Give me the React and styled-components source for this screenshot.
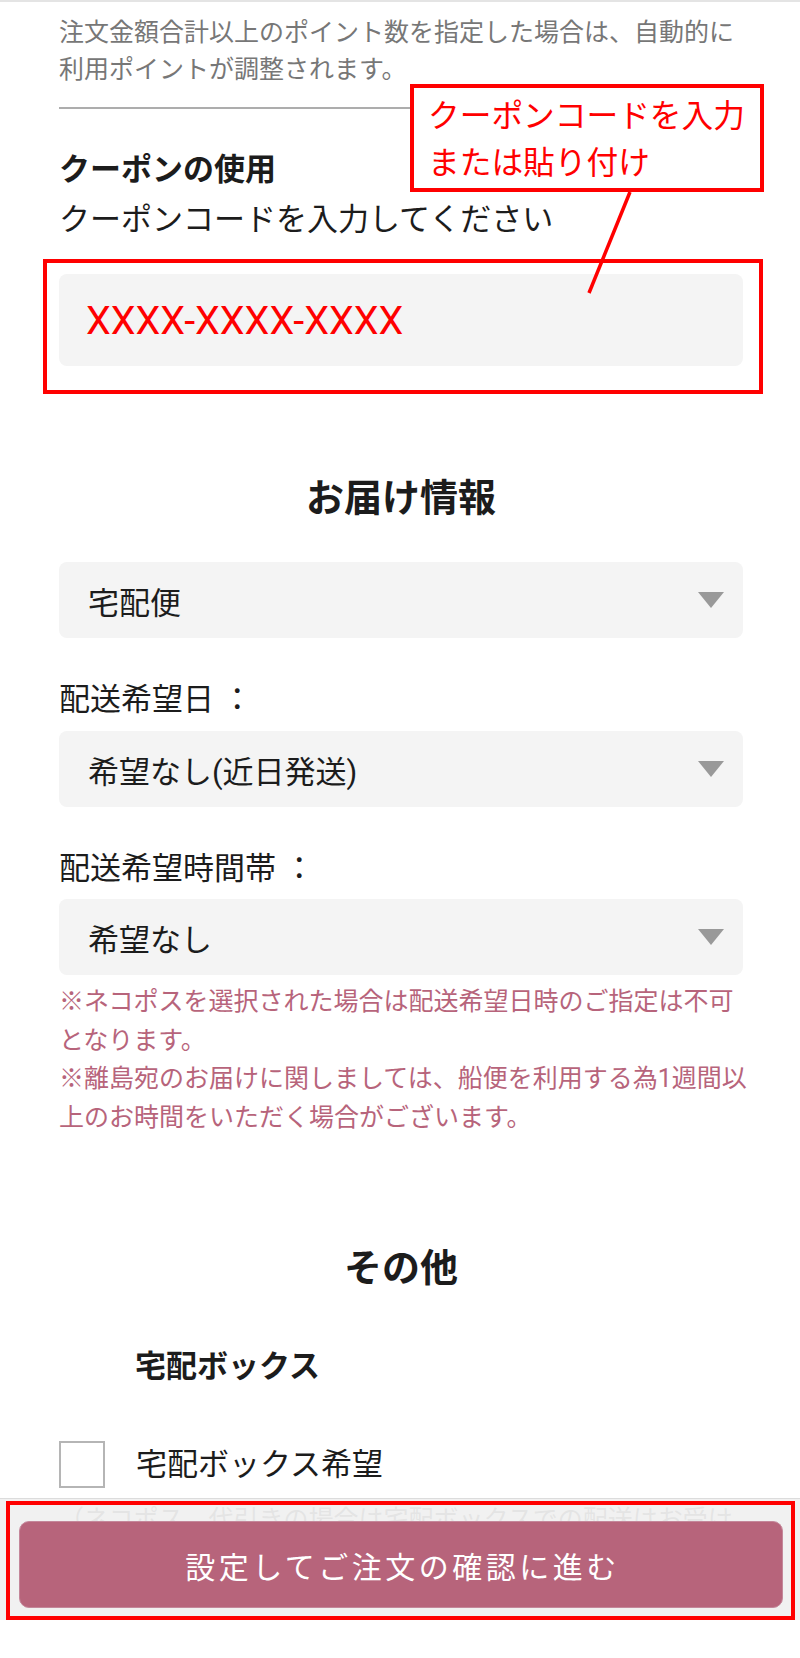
import React from "react";
import styled, { createGlobalStyle } from "styled-components";

const ink = "#1c1c1c";
const grey = "#777777";
const rose = "#b7647b";
const field = "#f4f4f4";
const mark = "#ff0000";

const GlobalStyle = createGlobalStyle`
  html, body {
    margin: 0;
    padding: 0;
    background: #fff;
  }
  body {
    font-family: Roboto, "Noto Sans CJK JP", sans-serif;
    color: ${ink};
  }
  * {
    box-sizing: border-box;
  }
`;

const Page = styled.div`
  position: relative;
  border-top: 2px solid #e4e4e4;
  padding: 0 57px 0 59px;
  height: 1656px;
  overflow: hidden;
`;

const Note = styled.p`
  margin: ${(p) => p.$mt || 0}px 0 0;
  font-size: 25px;
  line-height: ${(p) => p.$lh || 37}px;
  color: ${(p) => p.$color || grey};
  white-space: nowrap;
`;

const Rule = styled.div`
  margin-top: 19px;
  height: 2px;
  background: #adadad;
`;

const FieldTitle = styled.h3`
  margin: ${(p) => p.$mt}px 0 0;
  padding-left: ${(p) => p.$indent || 0}px;
  font-size: 31px;
  line-height: 50px;
  font-weight: 700;
`;

const FieldLabel = styled.div`
  margin-top: ${(p) => p.$mt || 0}px;
  font-size: 31px;
  line-height: 50px;
`;

const CouponInput = styled.input`
  display: block;
  width: 100%;
  height: 92px;
  margin-top: 29px;
  padding: 0 27px;
  border: none;
  border-radius: 8px;
  background: ${field};
  font-family: Roboto, sans-serif;
  font-size: 39.5px;
  color: ${mark};
  outline: none;
`;

const SectionTitle = styled.h2`
  margin: ${(p) => p.$mt}px 0 0;
  text-align: center;
  font-size: 38px;
  line-height: 50px;
  font-weight: 700;
`;

const Select = styled.div`
  display: flex;
  align-items: center;
  justify-content: space-between;
  height: 76px;
  margin-top: ${(p) => p.$mt}px;
  padding: 0 19px 0 29px;
  border-radius: 8px;
  background: ${field};
  font-size: 31px;
`;

const Caret = () => (
  <svg width="26" height="16" viewBox="0 0 26 16">
    <polygon points="0,0 26,0 13,16" fill="#999" />
  </svg>
);

const CheckRow = styled.label`
  display: flex;
  align-items: center;
  gap: 31px;
  margin-top: 49px;
  font-size: 31px;
  line-height: 47px;
`;

const Box = styled.span`
  width: 46px;
  height: 47px;
  border: 2px solid #b5b5b5;
  background: #fff;
`;

const Footer = styled.div`
  position: fixed;
  left: 0;
  right: 0;
  bottom: 38px;
  height: 122px;
  padding: 22px 17px 0 19px;
  border-top: 1px solid #dcdcdc;
  background: rgba(239, 239, 239, 0.9);
`;

const SubmitButton = styled.button`
  display: block;
  width: 100%;
  height: 87px;
  border: 1px solid #c4879a;
  border-radius: 10px;
  background: ${rose};
  color: #fff;
  font-family: Roboto, "Noto Sans CJK JP", sans-serif;
  font-size: 30px;
  letter-spacing: 3.5px;
  padding: 0 0 0 3px;
`;

/* annotations drawn on top of the screenshot */
const CalloutBox = styled.div`
  position: absolute;
  top: 82px;
  left: 410px;
  width: 354px;
  height: 108px;
  padding: 5px 0 0 14px;
  border: 4px solid ${mark};
  background: #fff;
  color: ${mark};
  font-size: 31.7px;
  line-height: 47px;
  white-space: nowrap;
`;

const InputFrame = styled.div`
  position: absolute;
  top: 257px;
  left: 43px;
  width: 720px;
  height: 135px;
  border: 4px solid ${mark};
  pointer-events: none;
`;

const LeaderLine = styled.svg`
  position: absolute;
  top: 188px;
  left: 584px;
`;

const FooterFrame = styled.div`
  position: absolute;
  top: 2px;
  left: 6px;
  right: 5px;
  bottom: 0;
  border: 4px solid ${mark};
  pointer-events: none;
`;

export default function App() {
  return (
    <>
      <GlobalStyle />
      <Page>
        <Note $mt={12}>
          注文金額合計以上のポイント数を指定した場合は、自動的に
          <br />
          利用ポイントが調整されます。
        </Note>
        <Rule />

        <FieldTitle $mt={36}>クーポンの使用</FieldTitle>
        <FieldLabel>クーポンコードを入力してください</FieldLabel>
        <CouponInput defaultValue="XXXX-XXXX-XXXX" readOnly />

        <SectionTitle $mt={107}>お届け情報</SectionTitle>
        <Select $mt={39}>
          <span>宅配便</span>
          <Caret />
        </Select>
        <FieldLabel $mt={37}>配送希望日 ：</FieldLabel>
        <Select $mt={6}>
          <span>希望なし(近日発送)</span>
          <Caret />
        </Select>
        <FieldLabel $mt={37}>配送希望時間帯 ：</FieldLabel>
        <Select $mt={5}>
          <span>希望なし</span>
          <Caret />
        </Select>
        <Note $mt={8} $lh={38.5} $color={rose}>
          ※ネコポスを選択された場合は配送希望日時のご指定は不可
          <br />
          となります。
          <br />
          ※離島宛のお届けに関しましては、船便を利用する為1週間以
          <br />
          上のお時間をいただく場合がございます。
        </Note>

        <SectionTitle $mt={106}>その他</SectionTitle>
        <FieldTitle $mt={49} $indent={76}>
          宅配ボックス
        </FieldTitle>
        <CheckRow>
          <Box />
          宅配ボックス希望
        </CheckRow>
        <Note $mt={13} $lh={38}>
          （ネコポス、代引きの場合は宅配ボックスでの配送はお受け
        </Note>

        <InputFrame />
        <LeaderLine width="50" height="106" viewBox="0 0 50 106">
          <line x1="46" y1="2" x2="5" y2="103" stroke={mark} strokeWidth="3.5" />
        </LeaderLine>
        <CalloutBox>
          クーポンコードを入力
          <br />
          または貼り付け
        </CalloutBox>
      </Page>

      <Footer>
        <SubmitButton type="button">設定してご注文の確認に進む</SubmitButton>
        <FooterFrame />
      </Footer>
    </>
  );
}
